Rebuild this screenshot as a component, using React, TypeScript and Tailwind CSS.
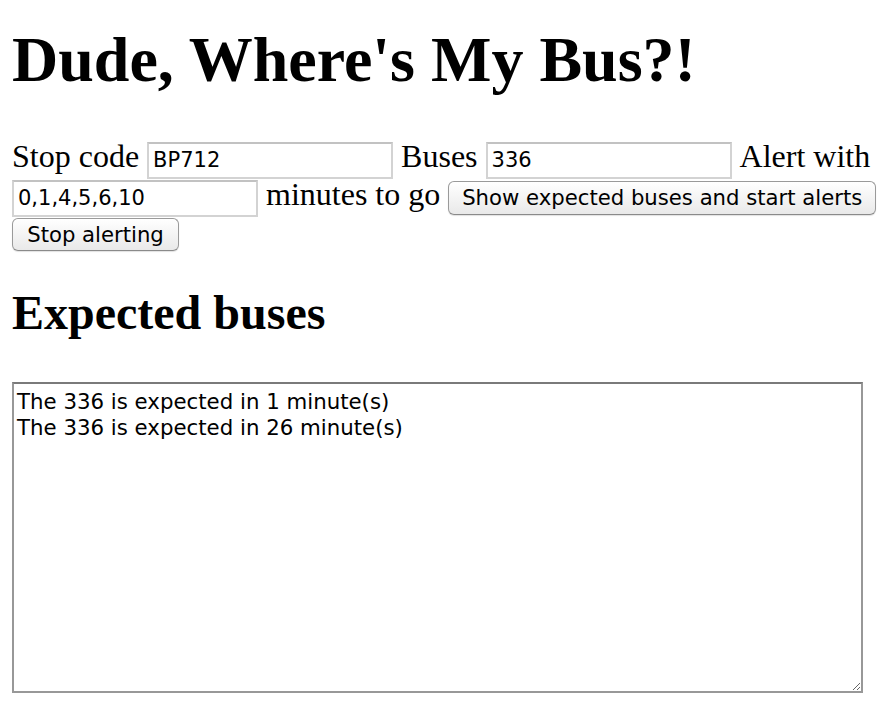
import React from "react";

const serif = "font-['Liberation_Serif','Times_New_Roman',serif]";

export default function App() {
  return (
    <div className={`min-h-[710px] bg-white px-3 text-black ${serif}`}>
      <h1 className="pt-[28px] text-[64px] font-bold leading-[64px] whitespace-nowrap">
        Dude, Where's My Bus?!
      </h1>

      <div className="mt-[49px] flex flex-col text-[32px] whitespace-nowrap">
        <div className="flex h-[38px] items-baseline gap-2">
          <span className="shrink-0 leading-[30px]">Stop code</span>
          <Field value="BP712" />
          <span className="shrink-0 leading-[30px]">Buses</span>
          <Field value="336" />
          <span className="shrink-0 leading-[30px]">Alert with</span>
        </div>
        <div className="flex h-[38px] items-baseline gap-2">
          <Field value="0,1,4,5,6,10" />
          <span className="shrink-0 leading-[30px]">minutes to go</span>
          <Btn className="w-[428px] h-[34px]">Show expected buses and start alerts</Btn>
        </div>
        <div className="mt-[1px] flex items-baseline">
          <Btn className="w-[167px] h-[33px]">Stop alerting</Btn>
        </div>
      </div>

      <h2 className="mt-[38px] text-[48px] font-bold leading-[48px] whitespace-nowrap">Expected buses</h2>

      <textarea
        readOnly
        className="mt-[45px] block h-[311px] w-[851px] resize-y border-2 border-[#989898] border-t-[#7a7a7a] bg-white pt-[5px] pl-[3px] font-['DejaVu_Sans',sans-serif] text-[21.3px] leading-[26px] text-black outline-none"
        value={"The 336 is expected in 1 minute(s)\nThe 336 is expected in 26 minute(s)"}
      />
    </div>
  );
}

function Field({ value }: { value: string }) {
  return (
    <input
      readOnly
      value={value}
      className="h-[37px] w-[246px] shrink-0 border-2 border-[#d3d3d3] border-t-[#c2c2c2] bg-white px-[4px] font-['DejaVu_Sans',sans-serif] text-[21px] text-black outline-none"
    />
  );
}

function Btn({ children, className }: { children: React.ReactNode; className?: string }) {
  return (
    <button
      className={`flex shrink-0 items-center justify-center whitespace-nowrap rounded-[6px] border border-[#9a9a9a] border-b-[#8a8a8a] bg-linear-to-b from-white to-[#e9e9e9] font-['DejaVu_Sans',sans-serif] text-[21.2px] leading-none text-black shadow-[0_1px_1px_rgba(0,0,0,0.12)] ${className ?? ""}`}
    >
      {children}
    </button>
  );
}
